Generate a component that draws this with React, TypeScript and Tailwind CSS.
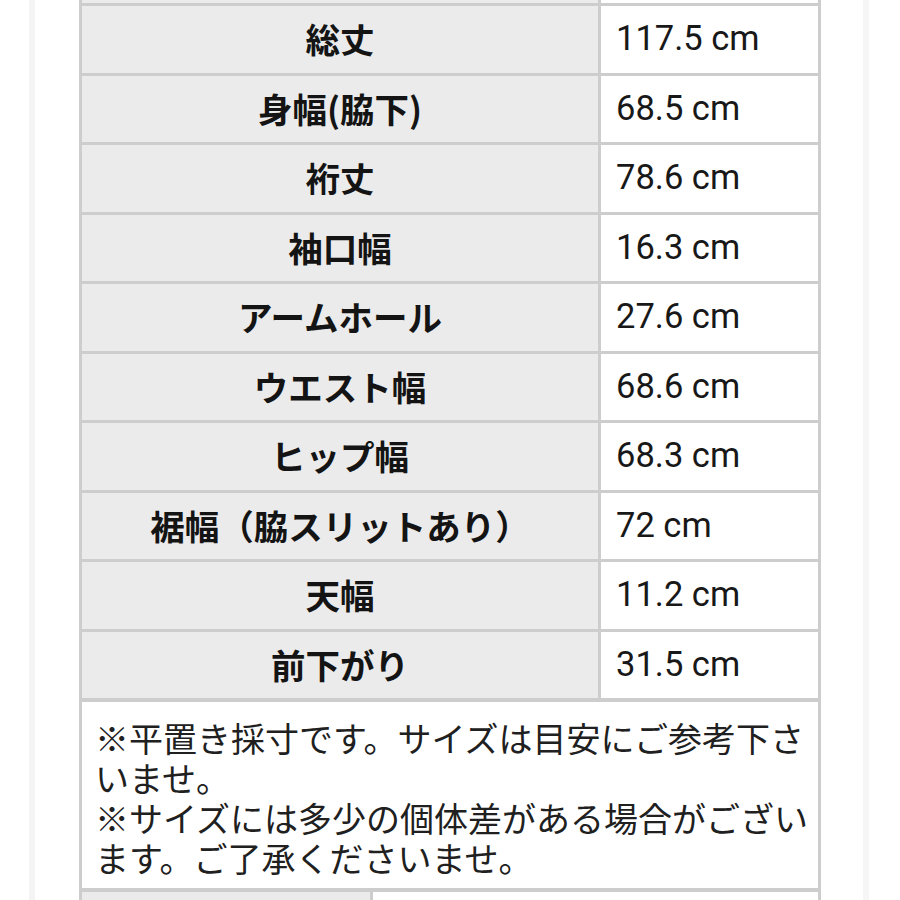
import React from 'react';

interface SizeRow {
  label: string;
  value: string;
}

const rows: SizeRow[] = [
  { label: '総丈', value: '117.5 cm' },
  { label: '身幅(脇下)', value: '68.5 cm' },
  { label: '裄丈', value: '78.6 cm' },
  { label: '袖口幅', value: '16.3 cm' },
  { label: 'アームホール', value: '27.6 cm' },
  { label: 'ウエスト幅', value: '68.6 cm' },
  { label: 'ヒップ幅', value: '68.3 cm' },
  { label: '裾幅（脇スリットあり）', value: '72 cm' },
  { label: '天幅', value: '11.2 cm' },
  { label: '前下がり', value: '31.5 cm' },
];

const jpFont = "font-['Noto_Sans_CJK_JP','Noto_Sans',sans-serif]";

// One measurement row: grey label cell + white value cell
function MeasureRow({ label, value }: SizeRow) {
  return (
    <div className="flex h-[69.5px] border-t-[3px] border-[#cdcdcd]">
      <div
        className={`w-[516px] bg-[#ebebeb] flex items-center justify-center text-[34.5px] font-bold text-[#141414] ${jpFont}`}
      >
        {label}
      </div>
      <div className="flex-1 bg-white border-l-[3px] border-[#cdcdcd] flex items-center pl-[15px] text-[34.5px] text-[#181818] font-['Roboto','Liberation_Sans',sans-serif]">
        {value}
      </div>
    </div>
  );
}

export default function App() {
  return (
    <div className="w-[900px] h-[900px] overflow-hidden bg-white flex">
      <div className="w-[29px] shrink-0" />
      <div className="w-[6px] shrink-0 bg-[#f4f4f4]" />

      <div className="w-[828px] shrink-0 pl-[44px]">
        <div className="w-[742px] border-x-[3px] border-[#cdcdcd]">
          {/* tail of the row above, cut off by the top edge */}
          <div className="flex h-[3px]">
            <div className="w-[516px] bg-[#ebebeb]" />
            <div className="flex-1 bg-white border-l-[3px] border-[#cdcdcd]" />
          </div>

          {rows.map(row => (
            <MeasureRow key={row.label} label={row.label} value={row.value} />
          ))}

          {/* size note */}
          <div
            className={`border-y-[4px] border-[#cdcdcd] bg-white pt-[16px] pb-[10px] pl-[13px] text-[34px] leading-[40px] text-[#202020] whitespace-nowrap ${jpFont}`}
          >
            ※平置き採寸です。サイズは目安にご参考下さ
            <br />
            いませ。
            <br />
            ※サイズには多少の個体差がある場合がござい
            <br />
            ます。ご了承くださいませ。
          </div>

          {/* next row, cut off by the bottom edge */}
          <div className="flex h-[40px]">
            <div className="w-[288px] bg-[#ebebeb]" />
            <div className="flex-1 bg-white border-l-[3px] border-[#cdcdcd]" />
          </div>
        </div>
      </div>

      <div className="w-[6px] shrink-0 bg-[#f6f6f6]" />
    </div>
  );
}
